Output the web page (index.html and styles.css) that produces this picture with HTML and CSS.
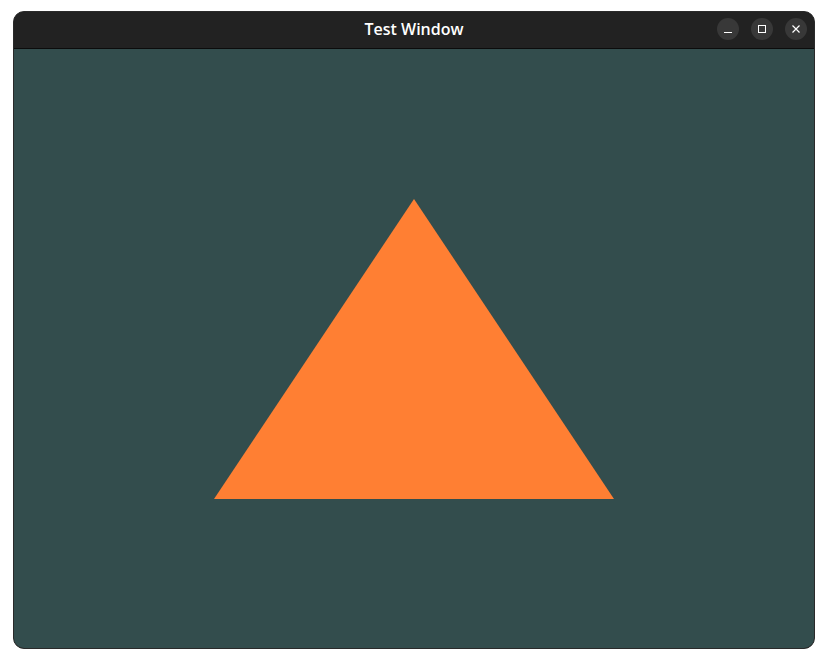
FILE: index.html
```html
<!DOCTYPE html>
<html>
<head>
<meta charset="utf-8">
<link rel="stylesheet" href="styles.css">
</head>
<body>
<div class="window">
  <div class="titlebar">
    <div class="title">Test Window</div>
    <div class="controls">
      <div class="btn"><svg width="22" height="22" viewBox="0 0 22 22"><line x1="7" y1="14.5" x2="15" y2="14.5" stroke="#fff" stroke-width="1"/></svg></div>
      <div class="btn"><svg width="22" height="22" viewBox="0 0 22 22"><rect x="7.5" y="7.5" width="7" height="7" fill="none" stroke="#fff" stroke-width="1"/></svg></div>
      <div class="btn"><svg width="22" height="22" viewBox="0 0 22 22"><path d="M7.5 7.5 L14.5 14.5 M14.5 7.5 L7.5 14.5" stroke="#fff" stroke-width="1.2"/></svg></div>
    </div>
  </div>
  <div class="content">
    <svg width="800" height="599" viewBox="0 0 800 599"><polygon points="200,450 600,450 400,150" fill="#ff7f33"/></svg>
  </div>
</div>
</body>
</html>
```
FILE: styles.css
```css
html, body { margin: 0; padding: 0; background: #ffffff; }
.window {
  margin: 11px 0 0 13px;
  width: 800px;
  border: 1px solid #2a2a2a;
  border-radius: 11px;
  overflow: hidden;
  background: #222222;
}
.titlebar {
  position: relative;
  height: 36px;
  background: #222222;
  border-bottom: 1px solid #0c0c0c;
  display: flex;
  align-items: center;
  justify-content: center;
}
.title {
  color: #ffffff;
  font-family: "Open Sans", "DejaVu Sans", sans-serif;
  font-weight: 600;
  font-size: 16px;
  margin-top: -2px;
}
.controls {
  position: absolute;
  right: 7px;
  top: 6px;
  display: flex;
  gap: 12px;
}
.btn {
  width: 22px;
  height: 22px;
  border-radius: 50%;
  background: #383838;
}
.btn svg { display: block; }
.content {
  height: 599px;
  background: #334d4d;
}
.content svg { display: block; }
```
